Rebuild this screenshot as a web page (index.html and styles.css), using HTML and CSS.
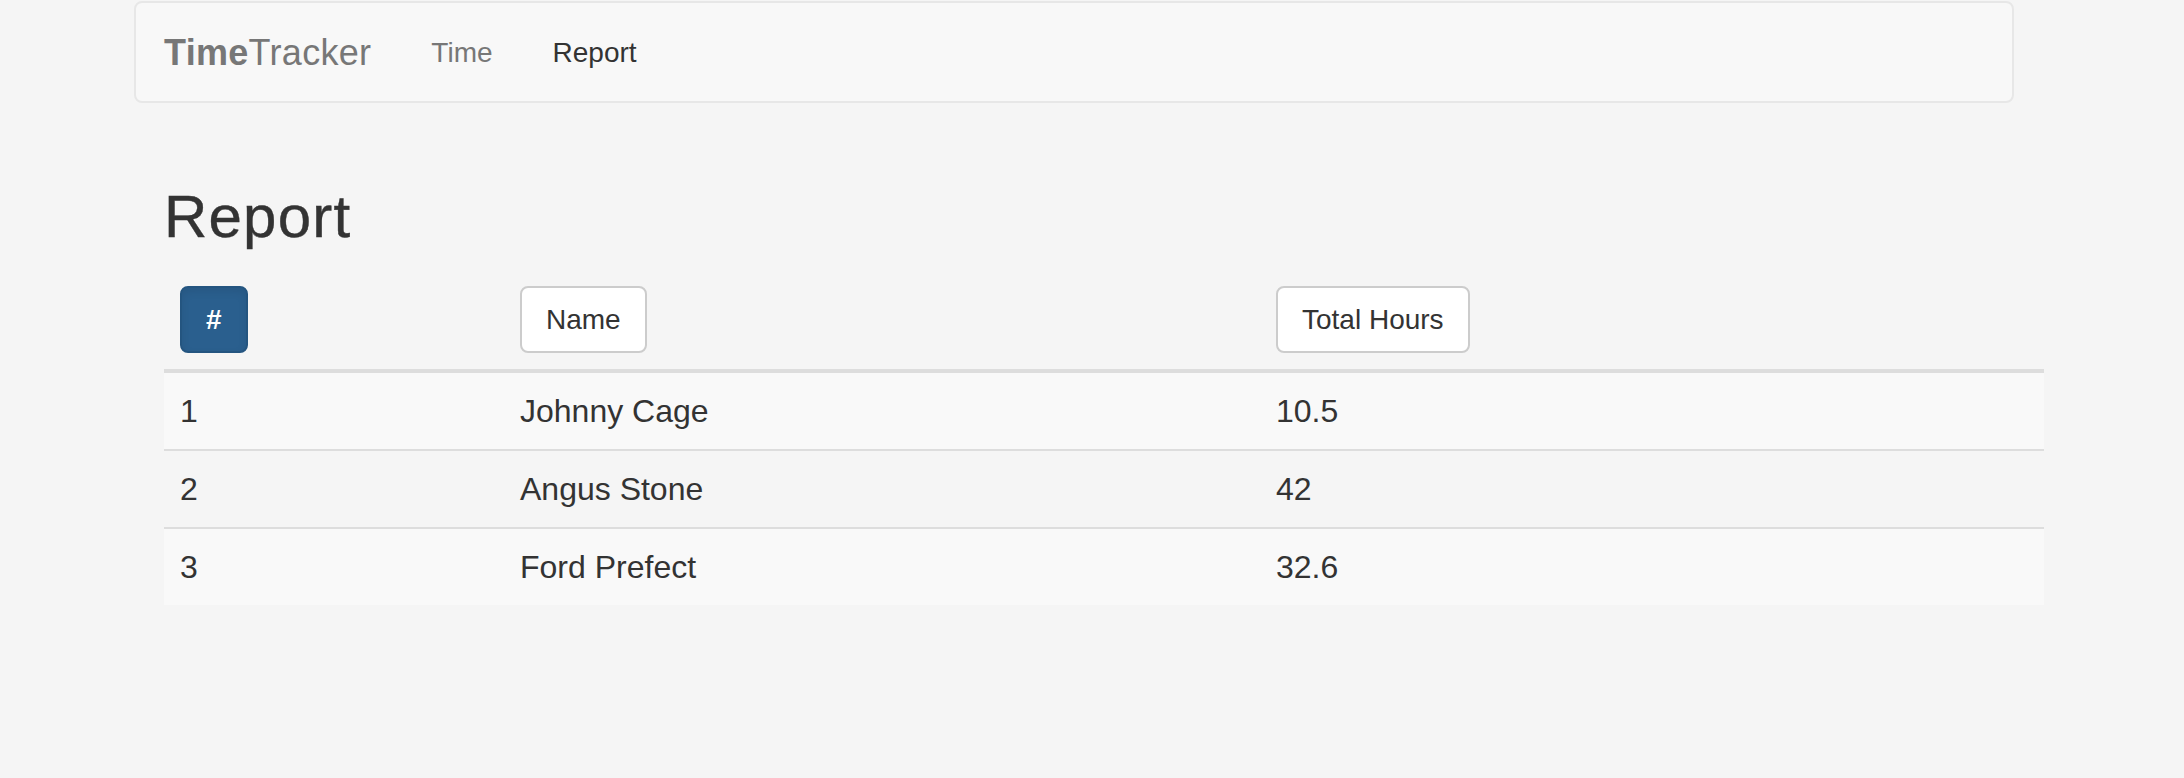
FILE: index.html
```html
<!DOCTYPE html>
<html lang="en">
<head>
<meta charset="utf-8">
<title>TimeTracker - Report</title>
<link rel="stylesheet" href="styles.css">
</head>
<body>
  <nav class="navbar">
    <a class="brand" href="#"><b>Time</b>Tracker</a>
    <ul class="nav">
      <li><a class="nav-link" href="#">Time</a></li>
      <li><a class="nav-link active" href="#">Report</a></li>
    </ul>
  </nav>
  <main class="main">
    <h2 class="title">Report</h2>
    <table class="report">
      <thead>
        <tr>
          <th class="col-num"><button class="sort-btn active">#</button></th>
          <th class="col-name"><button class="sort-btn">Name</button></th>
          <th class="col-hours"><button class="sort-btn">Total Hours</button></th>
        </tr>
      </thead>
      <tbody>
        <tr><td>1</td><td>Johnny Cage</td><td>10.5</td></tr>
        <tr><td>2</td><td>Angus Stone</td><td>42</td></tr>
        <tr><td>3</td><td>Ford Prefect</td><td>32.6</td></tr>
      </tbody>
    </table>
  </main>
</body>
</html>
```
FILE: styles.css
```css
* { box-sizing: border-box; }

html, body {
  margin: 0;
  padding: 0;
}

body {
  background: #f5f5f5;
  color: #333;
  font-family: "Liberation Sans", Arial, Helvetica, sans-serif;
  width: 2184px;
  height: 778px;
  overflow: hidden;
}

.navbar {
  display: flex;
  align-items: flex-start;
  margin: 1px 0 0 134px;
  width: 1880px;
  height: 102px;
  padding-left: 28px;
  background: #f8f8f8;
  border: 2px solid #e7e7e7;
  border-radius: 8px;
}

.brand {
  display: block;
  padding: 30px 30px 0 0;
  font-size: 36px;
  line-height: 40px;
  letter-spacing: 0.3px;
  color: #777;
  text-decoration: none;
}

.brand b { font-weight: 700; }

.nav {
  display: flex;
  margin: 0;
  padding: 0;
  list-style: none;
}

.nav-link {
  display: block;
  padding: 30px 30px 0;
  font-size: 28px;
  line-height: 40px;
  color: #777;
  text-decoration: none;
}

.nav-link.active { color: #333; }

.main {
  margin-left: 164px;
  width: 1880px;
  padding-top: 81px;
}

.title {
  margin: 0 0 20px;
  font-size: 60px;
  line-height: 66px;
  font-weight: 500;
  letter-spacing: 1.2px;
  color: #333;
  -webkit-text-stroke: 0.4px #333;
}

.report {
  width: 1880px;
  border-collapse: collapse;
  border-spacing: 0;
  table-layout: fixed;
}

.report th,
.report td {
  padding: 16px;
  text-align: left;
}

.report th {
  vertical-align: bottom;
  border-bottom: 4px solid #ddd;
}

.col-num { width: 340px; }
.col-name { width: 756px; }
.col-hours { width: 784px; }

.report td {
  font-size: 32px;
  line-height: 44px;
  color: #333;
  border-top: 2px solid #ddd;
  vertical-align: top;
}

.report tbody tr:nth-child(odd) { background: #f9f9f9; }

.sort-btn {
  display: block;
  width: fit-content;
  margin: 0;
  padding: 12px 24px;
  font-family: "Liberation Sans", Arial, Helvetica, sans-serif;
  font-size: 28px;
  line-height: 39px;
  font-weight: 400;
  color: #333;
  background: #fff;
  border: 2px solid #ccc;
  border-radius: 8px;
  cursor: pointer;
}

.sort-btn.active {
  color: #fff;
  font-weight: 700;
  background: #2a5f8e;
  border-color: #245580;
  box-shadow: inset 0 4px 8px rgba(0, 0, 0, 0.08);
}
```
